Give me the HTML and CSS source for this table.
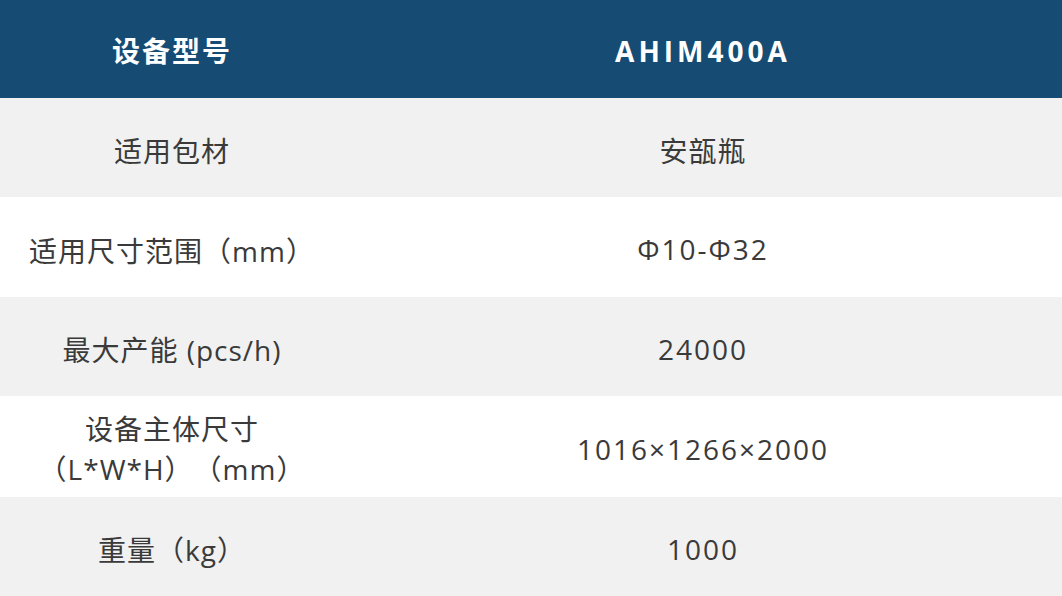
FILE: index.html
```html
<!DOCTYPE html>
<html lang="zh-CN">
<head>
<meta charset="utf-8">
<title>设备参数</title>
<link rel="stylesheet" href="styles.css">
</head>
<body>
<div class="spec">
  <div class="row head">
    <div class="cell label">设备型号</div>
    <div class="cell value model">AHIM400A</div>
  </div>
  <div class="row grey">
    <div class="cell label">适用包材</div>
    <div class="cell value">安瓿瓶</div>
  </div>
  <div class="row">
    <div class="cell label">适用尺寸范围（mm）</div>
    <div class="cell value num">Φ10-Φ32</div>
  </div>
  <div class="row grey">
    <div class="cell label">最大产能 (pcs/h)</div>
    <div class="cell value num">24000</div>
  </div>
  <div class="row">
    <div class="cell label two">设备主体尺寸<br>（L*W*H）（mm）</div>
    <div class="cell value num">1016×1266×2000</div>
  </div>
  <div class="row grey">
    <div class="cell label">重量（kg）</div>
    <div class="cell value num">1000</div>
  </div>
</div>
</body>
</html>
```

FILE: styles.css
```css
html, body {
  margin: 0;
  padding: 0;
  background: #ffffff;
}
body {
  font-family: "Open Sans", "Noto Sans CJK SC", sans-serif;
  color: #3a3a3a;
}
.spec {
  display: grid;
  grid-template-rows: 98px 99px 100px 99px 101px 99px;
  width: 1062px;
  height: 596px;
}
.row {
  display: grid;
  grid-template-columns: 344px 1fr;
  background: #ffffff;
}
.row.grey {
  background: #f1f1f1;
}
.row.head {
  background: #164c73;
  color: #ffffff;
  font-weight: 700;
}
.cell {
  display: flex;
  align-items: center;
  justify-content: center;
  text-align: center;
  font-size: 28px;
  line-height: 40px;
  letter-spacing: 1px;
  padding-top: 7px;
  text-spacing-trim: space-all;
}
.cell.num {
  letter-spacing: 2px;
  padding-top: 4px;
}
.cell.two {
  padding-top: 5px;
}
.head .cell {
  padding-top: 4px;
  letter-spacing: 2px;
}
.head .model {
  letter-spacing: 4px;
}
```
